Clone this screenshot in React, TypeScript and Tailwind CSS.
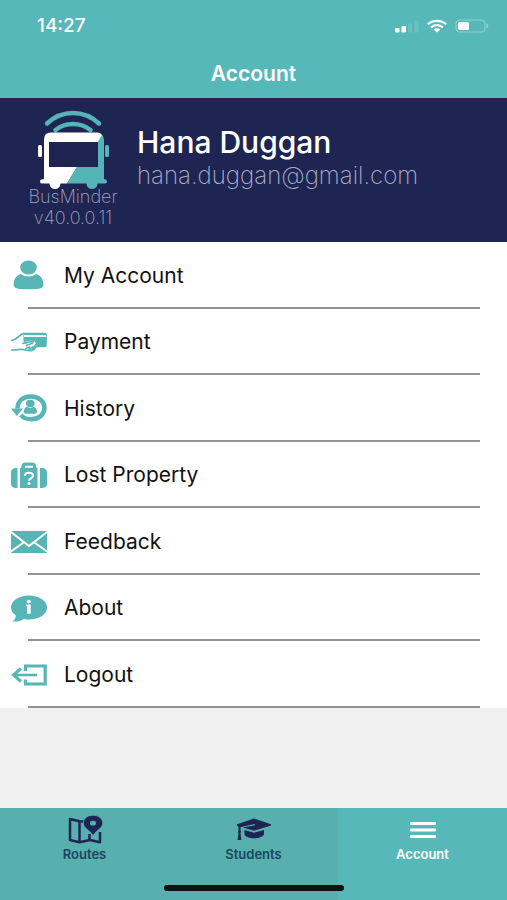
import type { ReactNode } from 'react'

interface MenuItem {
  label: string
  icon: ReactNode
}

function SignalIcon() {
  return (
    <svg width="24" height="14" viewBox="0 0 24 14" fill="#fff" aria-hidden="true">
      <rect x="0" y="9" width="4.5" height="4.5" rx="1" />
      <rect x="6.5" y="7" width="4.5" height="6.5" rx="1" />
      <rect x="13" y="4.500" width="4" height="9" rx="1" opacity="0.12" />
      <rect x="19.5" y="1.500" width="4" height="12" rx="1" opacity="0.12" />
    </svg>
  )
}

function WifiIcon() {
  return (
    <svg width="20" height="14" viewBox="0 0 20 14" fill="none" stroke="#fff" strokeWidth="2.2" aria-hidden="true">
      <path d="M.8 5.3C5.8.6 14.2.6 19.2 5.3" />
      <path d="M4 8.5c3.4-3.1 8.600-3.100 12 0" />
      <path d="M6.600 10.600c2-1.800 4.800-1.800 6.800 0L10 13.500z" fill="#fff" stroke="none" />
    </svg>
  )
}

function BatteryIcon() {
  return (
    <svg width="34" height="14" viewBox="0 0 34 14" aria-hidden="true">
      <rect x="1" y="1" width="29" height="12" rx="3.500" fill="none" stroke="#fff" strokeOpacity="0.35" />
      <rect x="3" y="3" width="11" height="8" rx="1.500" fill="#fff" />
      <path d="M31.500 4.500c2.400.8 2.400 4.200 0 5z" fill="#fff" fillOpacity="0.4" />
    </svg>
  )
}

function BusLogo() {
  return (
    <svg width="71" height="80" viewBox="0 0 71 80" aria-hidden="true">
      <g fill="none" stroke="#55b4b5" strokeWidth="4.600" strokeLinecap="round">
        <path d="M9 13.500C24-.500 46-.500 61 13.500" />
        <path d="M17.500 20c10-8 25-8 35 0" />
      </g>
      <rect x="0" y="35" width="4" height="12" rx="1.500" fill="#fff" />
      <rect x="67" y="35" width="4" height="12" rx="1.500" fill="#55b4b5" />
      <path
        d="M13 22.500h46q5 0 6 5L39 57 29 73.500h-6.500a5.500 5.500 0 0 1-11 0H4q-2 0-2-2t2-2.200h2V29.500q0-7 7-7z"
        fill="#fff"
      />
      <path
        d="M60 31.500 64 25q2 2 2 5v39.300h1q2 .2 2 2.200t-2 2h-7.500a5.500 5.500 0 0 1-11 0H29L39 57h21z"
        fill="#55b4b5"
      />
      <path d="M11 32h49v25H11z" fill="#1e2552" />
    </svg>
  )
}

function PersonIcon() {
  return (
    <svg width="36" height="30" viewBox="0 0 36 30" fill="currentColor" aria-hidden="true">
      <ellipse cx="17.500" cy="7.500" rx="8.300" ry="7" />
      <path d="M9.500 14q8 5 16 0 6.500 2 7 11-.2 3-5 3.800-10 1-20 0-4.500-.8-5-3.800.5-9 7-11z" />
    </svg>
  )
}

function PaymentIcon() {
  return (
    <svg width="36" height="20" viewBox="0 0 36 20" fill="currentColor" aria-hidden="true">
      <path d="M12.500.8h21Q35.800.8 35.800 3v10q0 2.200-2.300 2.200h-7.500L24 9.500q-6-2-11.500 1z" />
      <path d="M13 4h22" stroke="#fff" strokeWidth="1.800" />
      <g fill="none" stroke="currentColor" strokeWidth="1.700" strokeLinecap="round">
        <path d="M.8 8.500 4.500 7 11 2l2-.5" />
        <path d="M12 11.500c3.500-.5 7-2.500 10-1.500.5 2-4 2-6.500 3.500" />
        <path d="M.8 18c5 .2 8-1 11-.5 5 1.500 9 1.800 11.500-.5l2.500-3" />
        <path d="m15 16.500 3.500-1.500m-.5 2.500 4-2.500m0 2 2.500-4" />
      </g>
    </svg>
  )
}

function HistoryIcon() {
  return (
    <svg width="36" height="28" viewBox="0 0 36 28" fill="currentColor" aria-hidden="true">
      <path
        d="M6.500 14.500C6.500 7 12 2.500 19.800 2.500c8 0 13.700 4.800 13.700 11.300S28 25.300 20 25.300c-4 0-8-1.500-10.200-4.300"
        fill="none"
        stroke="currentColor"
        strokeWidth="4.400"
      />
      <path d="M0 14.500h12L5.800 22z" />
      <ellipse cx="19.300" cy="9.500" rx="4.300" ry="3.700" />
      <path d="M16 12.800q3.300 2.200 6.600 0 3 1 3.400 5-.3 1.700-2 1.900h-9.300q-1.700-.2-2-1.900.3-4 3.300-5z" />
    </svg>
  )
}

function LuggageIcon() {
  return (
    <svg width="36" height="27" viewBox="0 0 36 27" fill="currentColor" aria-hidden="true">
      <path d="M6.500 6v20H4.500Q0 25.500 0 22V10.500Q0 6.500 4.500 6zM29 6v20h2.500q4.500-.5 4.500-4V10.500Q36 6.500 31.500 6z" />
      <path d="M9 6q1.500 0 1.500-1.500Q10.500.500 14.500.500h6.500q4 0 4 4Q25 6 26.500 6v20H9zm5-2.200v2h8v-2z" fillRule="evenodd" />
      <path
        d="M13.800 13.800c.2-4.200 8.200-4.200 8.200 0 0 2.700-4 2.400-4 5"
        fill="none"
        stroke="#fff"
        strokeWidth="2"
      />
      <circle cx="18" cy="21.500" r="1.500" fill="#fff" />
    </svg>
  )
}

function EnvelopeIcon() {
  return (
    <svg width="36" height="22" viewBox="0 0 36 22" aria-hidden="true">
      <rect width="36" height="22" rx="1" fill="currentColor" />
      <path d="m0 1 18 14L36 1M0 20.500l13-9.300M36 20.500l-13-9.300" fill="none" stroke="#fff" strokeWidth="2" />
    </svg>
  )
}

function InfoBubbleIcon() {
  return (
    <svg width="36" height="27" viewBox="0 0 36 27" aria-hidden="true">
      <path
        d="M18 .5c10 0 18 5 18 12s-8 12-18 12q-2.500 0-5-.5-4 3-11.500 2.500Q5 23.500 5 20.500 0 17 0 12.500C0 5.500 8 .5 18 .5z"
        fill="currentColor"
      />
      <ellipse cx="17.800" cy="6.500" rx="2.200" ry="1.700" fill="#fff" />
      <path d="M15 9.500h4.700v9.200h-3.700v-7.500h-1z" fill="#fff" />
    </svg>
  )
}

function LogoutIcon() {
  return (
    <svg width="36" height="22" viewBox="0 0 36 22" fill="none" stroke="currentColor" strokeWidth="3.200" aria-hidden="true">
      <path d="M14.500 7V2h19.700v18H14.500v-4.500" />
      <path d="M26 11H3" strokeWidth="2.600" />
      <path d="M10 4.500 2.500 11l7.500 6.500" strokeWidth="3" />
    </svg>
  )
}

function MapIcon() {
  return (
    <svg width="36" height="30" viewBox="0 0 36 30" aria-hidden="true">
      <g fill="none" stroke="#1e2552" strokeWidth="2.500" strokeLinejoin="round">
        <path d="M17 6.500 12.500 6.200 3 4v21l9.500 2.200L23 25l10 2.200V17" />
        <path d="M12.500 6.500v20.500M22.500 19v6" />
      </g>
      <path
        d="M26 .2c5.700 0 9.800 3.400 9.800 7.800 0 5-5.800 6.800-9.800 12.500C22.300 14.800 16.300 13 16.300 8 16.300 3.600 20.500.2 26 .2z"
        fill="#1e2552"
        stroke="#57afae"
        strokeWidth="0.800"
      />
      <ellipse cx="26" cy="8.200" rx="3" ry="2.400" fill="#57afae" />
    </svg>
  )
}

function CapIcon() {
  return (
    <svg width="36" height="24" viewBox="0 0 36 24" fill="#1e2552" aria-hidden="true">
      <path d="M18 .5 35 6.200v1.300l-17 5.200-11-3.200 12-2.300-.4-1.200L4.500 9.300v3.500q1.200 1 0 2.200l.8 7H1.500l1-7q-1.200-1.200 0-2.200V8.800L1 7.500V6.200z" />
      <path d="m8.500 12 9.500 2.800L28 12v4.500c-2 4.500-17 5.500-19.500 0z" />
    </svg>
  )
}

function BarsIcon() {
  return (
    <svg width="26" height="16" viewBox="0 0 26 16" fill="#fff" aria-hidden="true">
      <rect width="26" height="3" rx="1" />
      <rect y="6.500" width="26" height="3" rx="1" />
      <rect y="13" width="26" height="3" rx="1" />
    </svg>
  )
}

const menuItems: MenuItem[] = [
  { label: 'My Account', icon: <PersonIcon /> },
  { label: 'Payment', icon: <PaymentIcon /> },
  { label: 'History', icon: <HistoryIcon /> },
  { label: 'Lost Property', icon: <LuggageIcon /> },
  { label: 'Feedback', icon: <EnvelopeIcon /> },
  { label: 'About', icon: <InfoBubbleIcon /> },
  { label: 'Logout', icon: <LogoutIcon /> },
]

export default function App() {
  return (
    <div className="flex min-h-screen flex-col bg-[#f0f0f0] font-['Inter',sans-serif]">
      {/* Header */}
      <header className="bg-[#57b8b9] text-white">
        <div className="flex h-13 items-center justify-between pr-[18px] pl-[37px]">
          <time className="text-[19px] font-medium">14:27</time>
          <div className="flex items-center gap-2">
            <SignalIcon />
            <WifiIcon />
            <BatteryIcon />
          </div>
        </div>
        <h1 className="h-[46px] pt-2 text-center text-[21px] leading-7 font-semibold">Account</h1>
      </header>

      {/* Profile */}
      <section className="flex h-36 bg-[#1e2552] pt-3">
        <div className="flex w-[137px] flex-col items-center pr-[9px] pl-[18px] text-lg leading-[21px] font-extralight text-[#a0a5c0]">
          <BusLogo />
          <span className="-mt-1">BusMinder</span>
          <span>v40.0.0.11</span>
        </div>
        <div className="pt-3">
          <h2 className="text-[30px] leading-10 font-medium text-white">Hana Duggan</h2>
          <p className="text-2xl leading-7 font-extralight text-[#a9aec8]">hana.duggan@gmail.com</p>
        </div>
      </section>

      {/* Menu */}
      <ul className="flex h-[466px] flex-col bg-white">
        {menuItems.map((item) => (
          <li key={item.label} className="relative flex-1">
            <button type="button" className="flex h-full w-full items-center gap-[17px] pl-[11px] text-left text-[#57b5b6]">
              {item.icon}
              <span className="text-[21px] text-[#111]">{item.label}</span>
            </button>
            <div className="absolute right-[27px] bottom-0 left-7 h-0.5 bg-[#939393]" />
          </li>
        ))}
      </ul>

      {/* Tab bar */}
      <nav className="relative mt-auto grid h-[92px] grid-cols-3 bg-[#57afae] text-[13px] leading-4 font-semibold text-[#1b4560]">
        <button type="button" className="flex flex-col items-center pt-1.5">
          <span className="flex h-8 items-center"><MapIcon /></span>
          Routes
        </button>
        <button type="button" className="flex flex-col items-center pt-1.5">
          <span className="flex h-8 items-center"><CapIcon /></span>
          Students
        </button>
        <button type="button" aria-current="page" className="flex flex-col items-center bg-[#57b8b9] pt-1.5 text-white">
          <span className="flex h-8 items-center"><BarsIcon /></span>
          Account
        </button>
        <div className="absolute bottom-[9px] left-1/2 h-1.5 w-[180px] -translate-x-1/2 rounded-full bg-[#111]" />
      </nav>
    </div>
  )
}
